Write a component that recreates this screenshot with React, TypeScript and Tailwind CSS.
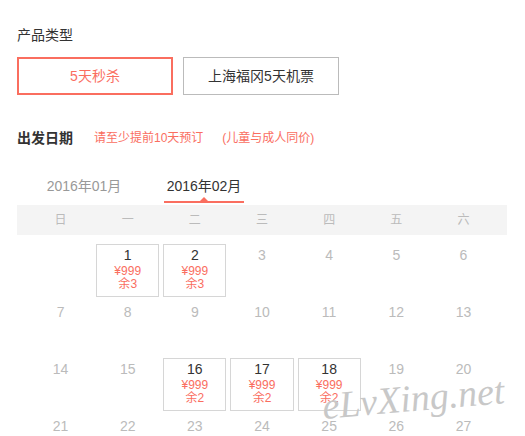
const FONT = '"Liberation Sans", "Noto Sans CJK SC", sans-serif';

type Day = { d: number; price?: string; left?: number } | null;

const weekDays = ["日", "一", "二", "三", "四", "五", "六"];

const avail: Record<number, number> = { 1: 3, 2: 3, 16: 2, 17: 2, 18: 2 };

const cells: Day[] = [null];
for (let d = 1; d <= 27; d++) {
  cells.push(avail[d] ? { d, price: "¥999", left: avail[d] } : { d });
}

function DayCell({ day }: { day: Day }) {
  if (!day) return <div className="h-[57px]" />;
  if (day.price) {
    return (
      <div className="h-[57px] p-[2px]">
        <div className="h-full border border-[#d6d6d6] flex flex-col items-center pt-[2px]">
          <span className="text-[14px] leading-[16px] text-[#333]">{day.d}</span>
          <span className="mt-[2px] text-[12px] leading-[13px] text-[#fa6e5f]">{day.price}</span>
          <span className="text-[12px] leading-[13px] text-[#fa6e5f]">余{day.left}</span>
        </div>
      </div>
    );
  }
  return (
    <div className="h-[57px] pt-[5px] flex justify-center">
      <span className="text-[14px] leading-[16px] text-[#bbb]">{day.d}</span>
    </div>
  );
}

export default function App() {
  return (
    <div
      className="relative w-[525px] h-[436px] overflow-hidden bg-white pl-[17px] pt-[27px]"
      style={{ fontFamily: FONT }}
    >
      <div className="text-[14px] leading-[16px] text-[#333]">产品类型</div>

      <div className="flex gap-[10px] mt-[14px]">
        <button className="w-[156px] h-[38px] border-2 border-[#fa6e5f] text-[14px] text-[#fa6e5f]">
          5天秒杀
        </button>
        <button className="w-[156px] h-[38px] border border-[#bbb] text-[14px] text-[#333]">
          上海福冈5天机票
        </button>
      </div>

      <div className="flex items-center mt-[35px] h-[16px]">
        <span className="text-[14px] font-semibold text-[#333]">出发日期</span>
        <span className="ml-[21px] text-[12px] text-[#fa6e5f]">请至少提前10天预订</span>
        <span className="ml-[19px] text-[12px] text-[#fa6e5f]">(儿童与成人同价)</span>
      </div>

      <div className="flex gap-[40px] ml-[27px] mt-[30px]">
        <div className="w-[80px] h-[27px] text-center text-[14px] leading-[20px] text-[#999]">
          2016年01月
        </div>
        <div className="relative w-[80px] h-[27px] text-center text-[14px] leading-[20px] text-[#333] border-b-2 border-[#fa6e5f]">
          2016年02月
          <span className="absolute left-1/2 -translate-x-1/2 bottom-0 w-0 h-0 border-x-[4px] border-x-transparent border-b-[4px] border-b-[#fa6e5f]" />
        </div>
      </div>

      <div className="mt-[2px] w-[490px] h-[30px] bg-[#f4f4f4] px-[10px] grid grid-cols-7 items-center">
        {weekDays.map((w) => (
          <div key={w} className="text-center text-[12px] text-[#bbb]">
            {w}
          </div>
        ))}
      </div>

      <div className="w-[490px] px-[10px] pt-[7px] grid grid-cols-7">
        {cells.map((c, i) => (
          <DayCell key={i} day={c} />
        ))}
      </div>

      <div
        className="absolute left-[322px] top-[376px] text-[38px] leading-[44px] italic text-[#c8c8c8] -rotate-[5deg] select-none pointer-events-none"
        style={{ fontFamily: '"Liberation Serif", serif' }}
      >
        eLvXing.net
      </div>
    </div>
  );
}
